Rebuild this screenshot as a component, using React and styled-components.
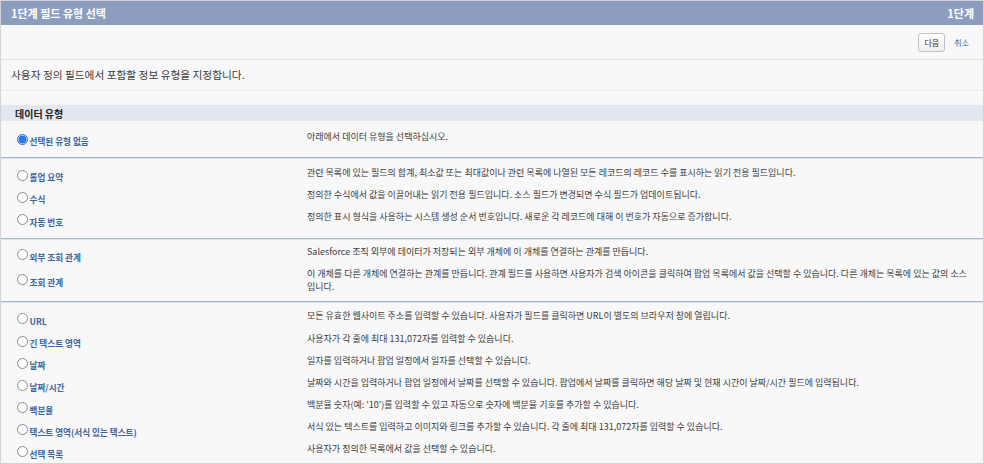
import React from "react";
import styled, { createGlobalStyle } from "styled-components";

const GlobalStyle = createGlobalStyle`
  html, body { margin: 0; padding: 0; background: #ffffff; }
  * { box-sizing: border-box; }
`;

const Frame = styled.div`
  height: 464px;
  overflow: hidden;
  border: 1px solid #d3d3d3;
  background: #f8f8f8;
  font-family: "Noto Sans CJK KR", "Liberation Sans", sans-serif;
  color: #3a3a3a;
`;

const TitleBar = styled.div`
  height: 24px;
  display: flex;
  align-items: center;
  justify-content: space-between;
  padding: 0 9px 0 10px;
  background: #8d9dbf;
  color: #ffffff;
  font-size: 11px;
  font-weight: 700;
`;

const ButtonBar = styled.div`
  height: 35px;
  display: flex;
  align-items: center;
  justify-content: flex-end;
  gap: 9px;
  padding: 0 14px 0 0;
  border-bottom: 1px solid #e0e0e0;
`;

const Button = styled.button`
  width: 27px;
  height: 19px;
  padding: 0;
  border: 1px solid #c2c2c2;
  border-radius: 3px;
  background: linear-gradient(#ffffff, #ededed);
  color: #333333;
  font-family: inherit;
  font-size: 8px;
  line-height: 17px;
`;

const Link = styled.a`
  color: #3a6aa8;
  font-size: 8px;
  text-decoration: none;
`;

const Intro = styled.div`
  height: 31px;
  display: flex;
  align-items: center;
  padding: 0 0 1px 10px;
  font-size: 10.7px;
  color: #3c3c3c;
  border-bottom: 1px solid #ebebeb;
`;

const SectionTitle = styled.h3`
  margin: 14px 0 0;
  height: 16px;
  display: flex;
  align-items: center;
  padding-left: 14px;
  background: #e3e7ef;
  font-size: 10px;
  font-weight: 700;
  color: #222222;
`;

const Group = styled.div`
  padding: ${(p) => p.$top}px 0 7px;
  border-bottom: 1px solid #a9b5cd;
  box-shadow: 0 1px 0 #dde2ec;
  margin-bottom: 1px;
`;

const Row = styled.div`
  display: grid;
  grid-template-columns: 306px 1fr;
  align-items: start;
`;

const LabelCell = styled.label`
  height: 22.2px;
  align-self: center;
  display: flex;
  align-items: flex-start;
  gap: 1.5px;
  padding: 5.5px 0 0 16px;
  cursor: pointer;
`;

const Radio = styled.input.attrs({ type: "radio", name: "dataType" })`
  appearance: none;
  margin: 0;
  width: 11px;
  height: 11px;
  flex: none;
  border-radius: 50%;
  border: 1px solid #8a8a8a;
  background: #ffffff;
  &:checked {
    border-color: #3468bf;
    background: radial-gradient(circle, #2a78e6 0 3.6px, #cfe0fb 4.2px 100%);
  }
`;

const LabelText = styled.span`
  margin-top: 2.5px;
  line-height: 11px;
  font-size: 8.6px;
  font-weight: 700;
  color: #3a669f;
  white-space: nowrap;
`;

const Desc = styled.div`
  padding: 2.5px 12px 0 0;
  font-size: 9px;
  line-height: 12.7px;
  color: #3c3c3c;
  white-space: nowrap;
`;

const groups = [
  {
    top: 7,
    rows: [
      { label: "선택된 유형 없음", desc: "아래에서 데이터 유형을 선택하십시오.", checked: true },
    ],
  },
  {
    top: 5,
    rows: [
      {
        label: "롤업 요약",
        desc: "관련 목록에 있는 필드의 합계, 최소값 또는 최대값이나 관련 목록에 나열된 모든 레코드의 레코드 수를 표시하는 읽기 전용 필드입니다.",
      },
      {
        label: "수식",
        desc: "정의한 수식에서 값을 이끌어내는 읽기 전용 필드입니다. 소스 필드가 변경되면 수식 필드가 업데이트됩니다.",
      },
      {
        label: "자동 번호",
        desc: "정의한 표시 형식을 사용하는 시스템 생성 순서 번호입니다. 새로운 각 레코드에 대해 이 번호가 자동으로 증가합니다.",
      },
    ],
  },
  {
    top: 4,
    rows: [
      {
        label: "외부 조회 관계",
        desc: "Salesforce 조직 외부에 데이터가 저장되는 외부 개체에 이 개체를 연결하는 관계를 만듭니다.",
      },
      {
        label: "조회 관계",
        desc: [
          "이 개체를 다른 개체에 연결하는 관계를 만듭니다. 관계 필드를 사용하면 사용자가 검색 아이콘을 클릭하여 팝업 목록에서 값을 선택할 수 있습니다. 다른 개체는 목록에 있는 값의 소스",
          "입니다.",
        ],
      },
    ],
  },
  {
    top: 5,
    rows: [
      {
        label: "URL",
        desc: "모든 유효한 웹사이트 주소를 입력할 수 있습니다. 사용자가 필드를 클릭하면 URL이 별도의 브라우저 창에 열립니다.",
      },
      { label: "긴 텍스트 영역", desc: "사용자가 각 줄에 최대 131,072자를 입력할 수 있습니다." },
      { label: "날짜", desc: "일자를 입력하거나 팝업 일정에서 일자를 선택할 수 있습니다." },
      {
        label: "날짜/시간",
        desc: "날짜와 시간을 입력하거나 팝업 일정에서 날짜를 선택할 수 있습니다. 팝업에서 날짜를 클릭하면 해당 날짜 및 현재 시간이 날짜/시간 필드에 입력됩니다.",
      },
      {
        label: "백분율",
        desc: "백분율 숫자(예: '10')를 입력할 수 있고 자동으로 숫자에 백분율 기호를 추가할 수 있습니다.",
      },
      {
        label: "텍스트 영역(서식 있는 텍스트)",
        desc: "서식 있는 텍스트를 입력하고 이미지와 링크를 추가할 수 있습니다. 각 줄에 최대 131,072자를 입력할 수 있습니다.",
      },
      { label: "선택 목록", desc: "사용자가 정의한 목록에서 값을 선택할 수 있습니다." },
    ],
  },
];

export default function App() {
  return (
    <>
      <GlobalStyle />
      <Frame>
        <TitleBar>
          <span>1단계 필드 유형 선택</span>
          <span>1단계</span>
        </TitleBar>
        <ButtonBar>
          <Button type="button">다음</Button>
          <Link href="#">취소</Link>
        </ButtonBar>
        <Intro>사용자 정의 필드에서 포함할 정보 유형을 지정합니다.</Intro>
        <SectionTitle>데이터 유형</SectionTitle>
        {groups.map((g, gi) => (
          <Group key={gi} $top={g.top}>
            {g.rows.map((r) => (
              <Row key={r.label}>
                <LabelCell>
                  <Radio defaultChecked={!!r.checked} />
                  <LabelText>{r.label}</LabelText>
                </LabelCell>
                <Desc>
                  {Array.isArray(r.desc)
                    ? r.desc.map((line, i) => (
                        <React.Fragment key={i}>
                          {i > 0 && <br />}
                          {line}
                        </React.Fragment>
                      ))
                    : r.desc}
                </Desc>
              </Row>
            ))}
          </Group>
        ))}
      </Frame>
    </>
  );
}
